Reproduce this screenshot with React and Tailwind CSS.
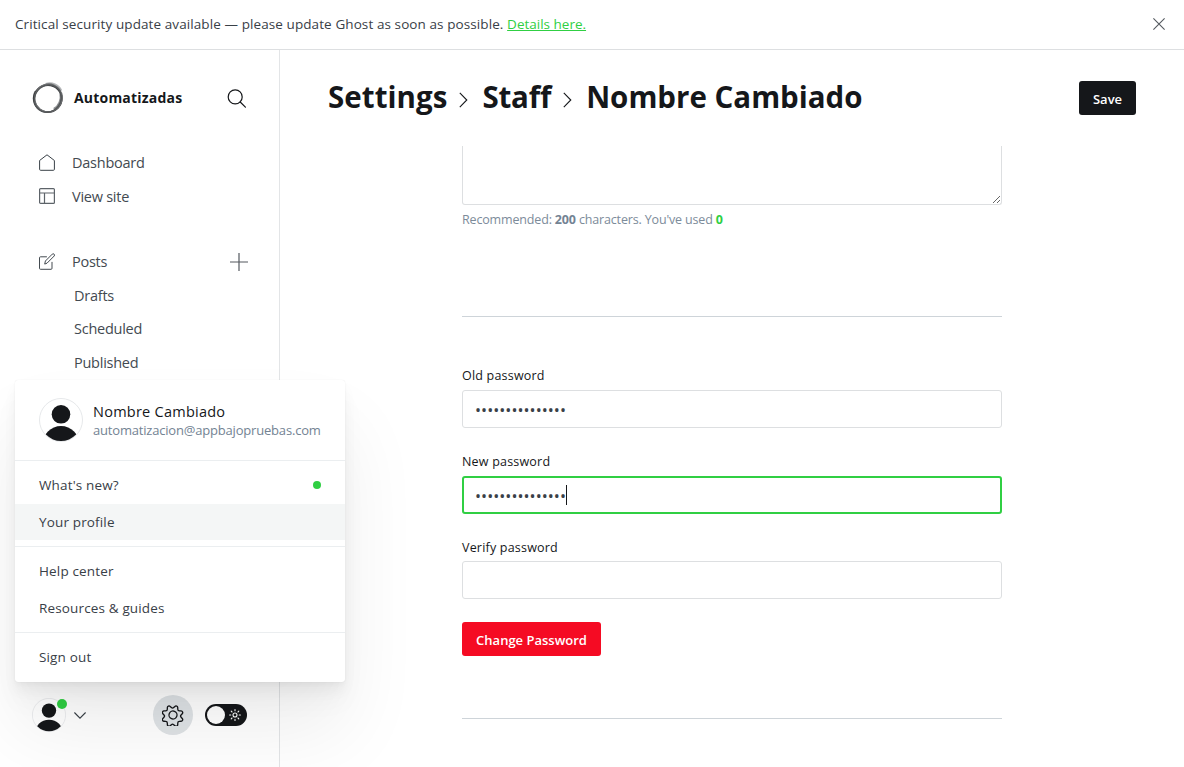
import React from "react";

function UserGlyph({ size }) {
  return (
    <svg width={size} height={size} viewBox="0 0 44 44" fill="none" className="shrink-0">
      <defs>
        <clipPath id="avatar-clip">
          <circle cx="22" cy="22" r="21" />
        </clipPath>
      </defs>
      <circle cx="22" cy="22" r="21.5" fill="#fff" stroke="#e6e8ea" strokeWidth="1" />
      <g fill="#15171a" clipPath="url(#avatar-clip)">
        <circle cx="22" cy="16.3" r="9.3" />
        <circle cx="22" cy="46.5" r="18.5" />
      </g>
    </svg>
  );
}

function Logo() {
  return (
    <svg width="32" height="32" viewBox="0 0 32 32" fill="none">
      <path d="M14 2.600c6-1.800 12.300 1 14.600 6.400" stroke="#b4b6b8" strokeWidth="3.400" />
      <path d="M28.800 11c1.400 6.500-1.300 13.300-6.800 16.300" stroke="#8f9193" strokeWidth="3" />
      <path d="M3.500 9.500c-3 6-1.500 13.500 3.500 17" stroke="#8f9193" strokeWidth="2.400" />
      <ellipse cx="15.800" cy="16.600" rx="14" ry="13.400" stroke="#3b3d3f" strokeWidth="1.800" />
      <ellipse cx="16.400" cy="15.800" rx="13.600" ry="14" stroke="#6d6f71" strokeWidth="1.300" transform="rotate(25 16 16)" />
      <ellipse cx="15.400" cy="16.200" rx="14.200" ry="12.800" stroke="#55585a" strokeWidth="1.300" transform="rotate(-50 16 16)" />
    </svg>
  );
}

function Gear() {
  return (
    <svg width="22" height="22" viewBox="0 0 24 24" fill="none" stroke="#15171a" strokeWidth="1.500" strokeLinecap="round" strokeLinejoin="round">
      <g transform="translate(12 12) rotate(22.5) scale(.97) translate(-11.840 -12.200)">
        <path d="M13.546 2.438l.79 1.733a1.872 1.872 0 0 0 2.378.987l1.780-.68a1.872 1.872 0 0 1 2.411 2.411l-.68 1.782a1.873 1.873 0 0 0 .987 2.378l1.734.789a1.873 1.873 0 0 1 0 3.410l-1.734.789a1.873 1.873 0 0 0-.987 2.378l.68 1.782a1.873 1.873 0 0 1-2.411 2.411l-1.782-.68a1.872 1.872 0 0 0-2.377.984l-.79 1.733a1.872 1.872 0 0 1-3.409 0l-.789-1.733a1.872 1.872 0 0 0-2.378-.984l-1.782.68a1.873 1.873 0 0 1-2.411-2.411l.68-1.782a1.872 1.872 0 0 0-.984-2.378l-1.734-.789a1.873 1.873 0 0 1 0-3.410l1.734-.789a1.872 1.872 0 0 0 .984-2.378l-.68-1.782a1.873 1.873 0 0 1 2.411-2.411l1.782.68a1.872 1.872 0 0 0 2.378-.987l.789-1.733a1.872 1.872 0 0 1 3.409 0z" />
        <circle cx="11.840" cy="12.200" r="4.500" />
      </g>
    </svg>
  );
}

function Sun() {
  return (
    <svg width="12" height="12" viewBox="0 0 12 12" fill="none" stroke="#fff" strokeWidth="1.100" strokeLinecap="round">
      <circle cx="6" cy="6" r="2" />
      <path d="M6 .6v1.200M6 10.200v1.200M.6 6h1.200M10.200 6h1.200M2.200 2.200l.8.8M9 9l.8.8M2.200 9.800L3 9M9 3l.8-.8" />
    </svg>
  );
}

function NavRow({ icon, label, children }) {
  return (
    <div className="flex h-[34px] items-center pl-[39px] pr-8 text-[14.5px] tracking-[-0.25px] text-[#434a51]">
      <span className="w-[33px] shrink-0 pb-[2px]">{icon}</span>
      <span className="flex-1">{label}</span>
      {children}
    </div>
  );
}

function MenuRow({ label, active, dot, short }) {
  const height = active || short ? "h-9" : "h-[37px]";
  return (
    <div className={`flex items-center justify-between px-6 ${height} ${active ? "bg-[#f4f6f6]" : ""}`}>
      <span>{label}</span>
      {dot && <span className="mb-px h-2 w-2 rounded-full bg-[#30cf43]" />}
    </div>
  );
}

function Crumb() {
  return (
    <svg width="9" height="16" viewBox="0 0 9 16" fill="none" stroke="#15171a" strokeWidth="1.100" className="ml-[12px] mr-[14px] mt-[4px]">
      <path d="M.8.8 7.800 8 .8 15.200" />
    </svg>
  );
}

export default function App() {
  return (
    <div className="relative flex h-[767px] w-[1184px] flex-col overflow-hidden bg-white font-['Open_Sans','Noto_Sans',sans-serif] text-[#394047]">
      <div className="flex h-[50px] shrink-0 items-center justify-between border-b border-[#dddfe1] pl-[15px] pr-[19px] text-[13.5px]">
        <p className="whitespace-nowrap pb-px tracking-[0.09px]">
          Critical security update available — please update Ghost as soon as possible.{" "}
          <a className="tracking-[0px] text-[#30cf43] underline">Details here.</a>
        </p>
        <svg width="12" height="12" viewBox="0 0 12 12" stroke="#54595f" strokeWidth="1.100" className="-mt-px">
          <path d="M.4.4l11.200 11.200M11.600.4.400 11.600" />
        </svg>
      </div>

      <div className="flex min-h-0 flex-1">
        <aside className="flex w-[280px] shrink-0 flex-col border-r border-[#e3e5e7]">
          <div className="flex h-24 items-center pb-px pl-8 pr-[33px]">
            <Logo />
            <span className="ml-[10px] flex-1 pb-px text-[14px] font-bold tracking-[0.2px] text-[#15171a]">Automatizadas</span>
            <svg width="19" height="19" viewBox="0 0 19 19" fill="none" stroke="#15171a" strokeWidth="1.200" strokeLinecap="round" className="mt-px">
              <circle cx="8.200" cy="7.900" r="7" />
              <path d="M13.200 13l5.200 5.200" />
            </svg>
          </div>

          <nav className="flex flex-col">
            <NavRow
              label="Dashboard"
              icon={
                <svg width="16" height="17" viewBox="0 0 16 17" fill="none" stroke="#394047" strokeLinejoin="round">
                  <path d="M.6 6.500 8 .8l7.400 5.700v8.800a1 1 0 0 1-1 1H1.600a1 1 0 0 1-1-1z" />
                </svg>
              }
            />
            <NavRow
              label="View site"
              icon={
                <svg width="16" height="16" viewBox="0 0 16 16" fill="none" stroke="#5d6369" strokeWidth="1.200">
                  <rect x=".6" y=".6" width="14.800" height="14.800" rx="1" />
                  <path d="M.5 5h15M5.500 5v10.500" />
                </svg>
              }
            />
            <div className="h-[31px]" />
            <NavRow
              label="Posts"
              icon={
                <svg width="16" height="17" viewBox="0 0 16 17" fill="none" stroke="#394047" strokeWidth=".95" strokeLinejoin="round" strokeLinecap="round">
                  <path d="M7.500 3.800H1.500a1 1 0 0 0-1 1v10.500a1 1 0 0 0 1 1h10.500a1 1 0 0 0 1-1V9.300" />
                  <path d="M5.800 10.700l.6-2.700 6.900-6.900a1.350 1.350 0 0 1 1.900 1.900l-6.900 6.900z" />
                </svg>
              }
            >
              <svg width="18" height="18" viewBox="0 0 18 18" stroke="#54595f" strokeWidth="1.200" className="-mr-px">
                <path d="M9 0v18M0 9h18" />
              </svg>
            </NavRow>
            <ul className="pl-[74px] text-[14.5px] tracking-[-0.25px] text-[#434a51]">
              <li className="flex h-[33px] items-center">Drafts</li>
              <li className="flex h-[34px] items-center">Scheduled</li>
              <li className="flex h-[33px] items-center">Published</li>
            </ul>
          </nav>

          <div className="mt-auto flex h-[104px] items-center pl-8 pr-8">
            <div className="relative">
              <UserGlyph size={34} />
              <span className="absolute left-[25px] top-[1px] h-[10px] w-[10px] rounded-full bg-[#30cf43]" />
            </div>
            <svg width="12" height="7" viewBox="0 0 12 7" fill="none" stroke="#394047" strokeWidth="1.100" className="ml-2">
              <path d="M.4.5 6 6.200 11.600.5" />
            </svg>
            <div className="ml-auto flex h-10 w-10 items-center justify-center rounded-full bg-[#dfe3e6]">
              <Gear />
            </div>
            <div className="ml-3 flex h-[22px] w-[42px] items-center justify-between rounded-full bg-[#15171a] pl-[2px] pr-[6px]">
              <span className="h-[18px] w-[18px] rounded-full bg-white" />
              <Sun />
            </div>
          </div>
        </aside>

        <main className="flex min-w-0 flex-1 flex-col">
          <header className="flex h-24 shrink-0 items-center justify-between px-12">
            <h1 className="flex items-center whitespace-nowrap pb-px text-[29.5px] font-bold text-[#15171a]">
              <span className="tracking-[0.05px]">Settings</span>
              <Crumb />
              <span className="tracking-[-0.2px]">Staff</span>
              <Crumb />
              <span>Nombre Cambiado</span>
            </h1>
            <button className="h-[34px] w-[57px] rounded-[3px] bg-[#15171a] pt-[3px] text-[13px] font-semibold text-white">Save</button>
          </header>

          <section className="mx-auto flex w-[540px] flex-col">
            <textarea className="block h-[59px] w-full resize-y rounded-b-[3px] border-x border-b border-[#dddfe1] outline-none" />
            <p className="mt-[5px] h-5 whitespace-nowrap text-[12.5px] leading-5 tracking-[-0.16px] text-[#7c8b9a]">
              Recommended: <b className="text-[#738393]">200</b> characters. You've used <b className="text-[#30cf43]">0</b>
            </p>
            <hr className="mt-[86px] border-[#ced4d9]" />

            <label className="mt-[49px] h-5 text-[12.5px] font-medium leading-5 tracking-[0.2px] text-[#15171a]">Old password</label>
            <div className="mt-1 flex h-[38px] items-center rounded-[3px] border border-[#dddfe1] px-3 pt-px">
              <span className="text-[16px] leading-none tracking-[0.05px]">•••••••••••••••</span>
            </div>

            <label className="mt-6 h-5 text-[12.5px] font-medium leading-5 tracking-[0.2px] text-[#15171a]">New password</label>
            <div className="mt-1 flex h-[38px] items-center rounded-[3px] border-2 border-[#30cf43] px-[11px]">
              <span className="pt-px text-[16px] leading-none tracking-[0.05px]">•••••••••••••••</span>
              <span className="h-5 w-px bg-[#15171a]" />
            </div>

            <label className="mt-6 h-5 text-[12.5px] font-medium leading-5 tracking-[0.2px] text-[#15171a]">Verify password</label>
            <div className="mt-[3px] h-[38px] rounded-[3px] border border-[#dddfe1]" />

            <button className="mt-[23px] h-[34px] w-[139px] whitespace-nowrap rounded-[3px] bg-[#f50b23] pt-[3px] text-[13px] font-semibold text-white">
              Change Password
            </button>
            <hr className="mt-[62px] border-[#ced4d9]" />
          </section>
        </main>
      </div>

      <div className="absolute left-[15px] top-[380px] flex h-[302px] w-[330px] flex-col rounded-[3px] bg-white text-[13.5px] tracking-[0.15px] shadow-[0_0_1px_rgba(0,0,0,0.12),0_3px_5px_rgba(0,0,0,0.025),0_9px_14px_rgba(0,0,0,0.04),0_20px_27px_rgba(0,0,0,0.03),0_50px_80px_rgba(0,0,0,0.07)]">
        <div className="flex h-20 items-center px-6">
          <UserGlyph size={44} />
          <div className="ml-[10px] flex flex-col pt-px">
            <span className="text-[14.5px] font-medium leading-[19px] tracking-[0.25px] text-[#15171a]">Nombre Cambiado</span>
            <span className="text-[13px] leading-[18px] tracking-[-0.19px] text-[#738393]">automatizacion@appbajopruebas.com</span>
          </div>
        </div>
        <div className="border-t border-[#ebeef0] py-[6px]">
          <MenuRow label="What's new?" dot />
          <MenuRow label="Your profile" active />
        </div>
        <div className="border-t border-[#ebeef0] py-[6px]">
          <MenuRow label="Help center" />
          <MenuRow label="Resources & guides" short />
        </div>
        <div className="border-t border-[#ebeef0] py-[6px]">
          <MenuRow label="Sign out" />
        </div>
      </div>
    </div>
  );
}
